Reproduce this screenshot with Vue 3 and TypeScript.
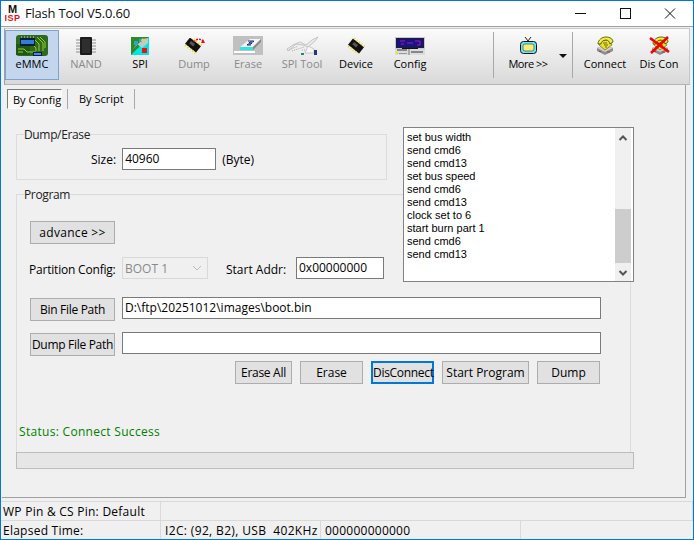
<script setup lang="ts">
interface ToolItem {
  label: string
  w: number
  h: number
  icon: string
  disabled?: boolean
  active?: boolean
}

const chip = `<g transform="rotate(38 9 8)"><rect x="2" y="4" width="14" height="8" fill="#111"/><rect x="5" y="6" width="5" height="3" fill="#555"/>
<path d="M3 3h1M6 3h1M9 3h1M12 3h1M15 3h1M3 13h1M6 13h1M9 13h1M12 13h1M15 13h1" stroke="#e8d800" stroke-width="2"/></g>`

const phone = `<path d="M1 12L9 9L17 12V15L9 19L1 15Z" fill="#8c8c8c"/><path d="M1 12L9 9L17 12L9 16Z" fill="#cfcfcf"/>
<path d="M3 9L5 4H13L16 9L9 14Z" fill="#e8e030" stroke="#55550f" stroke-width=".6"/>
<path d="M2 8C2 4 6 1 10 1C14 1 17 3 17 6L14 8C14 6 12 4 10 4C7 4 5 6 5 8Z" fill="#f6f13c" stroke="#3c3c00" stroke-width=".8"/>
<path d="M7 7h4M8 9h4M9 11h2" stroke="#6a6a10"/>
<path d="M3 15.5h2M11 16h3" stroke="#c33"/>`

const icons: Record<string, string> = {
  emmc: `<rect width="32" height="21" rx="3" fill="#2d6a1e"/><rect y="9" width="14" height="11" fill="#1f5a14"/>
<path d="M18 4l5 5v7M21 2l6 6v8M24 2l5 5v6M16 9l4 4v3M2 14h6l3 3h9M2 17h5" stroke="#9acb2c" fill="none"/>
<rect x="4" y="3" width="15" height="8" fill="#0c1c3a"/><rect x="5" y="5" width="13" height="4" fill="#2f7fd6"/>
<rect x="17" y="17" width="9" height="4" fill="#0c1c3a"/><rect x="18" y="18" width="7" height="2" fill="#3d8fe0"/>
<path d="M5 2h1M8 2h1M11 2h1M14 2h1M17 2h1" stroke="#ddd"/>`,
  nand: `<rect x="4" y="0" width="12" height="18" rx="1" fill="#1c1c1c"/><rect x="6" y="2" width="8" height="14" fill="#2e2e2e"/>
<path d="M0 3h4M0 6h4M0 9h4M0 12h4M0 15h4M16 3h4M16 6h4M16 9h4M16 12h4M16 15h4" stroke="#8c8c8c"/>`,
  spi: `<rect width="18" height="18" fill="#00e5e5"/><path d="M0 0H18L0 18Z" fill="#2f8a25"/><path d="M2 12L12 2L17 1V6L11 11L6 7Z" fill="#b5cfc7"/>
<rect x="3" y="4" width="4" height="4" fill="#2aa7c9"/><rect x="8" y="2" width="3" height="3" fill="#2aa7c9"/>
<path d="M11 1l5 3-2 3-4-3Z" fill="#d8c8a0"/><rect x="11" y="11" width="5" height="5" fill="#f01010"/>`,
  dump: `<g transform="translate(0 -1)">${chip}</g><path d="M10 4 C12 1 16 0 19 3" stroke="#e01010" stroke-width="1.4" fill="none" stroke-dasharray="2 1"/><path d="M17 5L21 5L19 1Z" fill="#e01010"/>`,
  erase: `<rect width="30" height="19" fill="#c0c0c0"/><path d="M7 11L17 3H28L20 11Z" fill="#f4f4f4"/><path d="M15 5h6l-1 1h-3l-1 1h3l-1 1h-3l-1 1h4" stroke="#1a2a80" fill="none"/>
<rect x="7" y="11" width="13" height="3" fill="#2ee6e6"/><path d="M20 11L28 3V6L20 14Z" fill="#8a8a8a"/><rect x="1" y="15" width="21" height="2" fill="#fff"/>`,
  spitool: `<path d="M2 15L10 8L17 9L22 11L29 5L32 1L26 4L20 9L14 6L7 9L1 13Z" fill="#ececec" stroke="#b8b8b8" stroke-width=".8"/>
<path d="M3 14L12 10M6 15L18 11M16 14H28" stroke="#aaa" stroke-dasharray="1 1"/><path d="M22 10L28 13V17H19Z" fill="#f6f6f6" stroke="#c8c8c8"/>
<rect x="28" y="14" width="3" height="5" fill="#1f3a80"/><rect x="15" y="17" width="3" height="2" fill="#2a7f7f"/>`,
  device: chip,
  config: `<rect width="30" height="18" fill="#c8c8c8"/><rect x="2" y="1" width="27" height="2" fill="#1b7f7f"/><rect x="1" y="1" width="28" height="10" fill="#1a1a50"/>
<rect x="3" y="3" width="24" height="6" fill="#1a1090"/><path d="M5 4h5M6 7h3M12 6h6M20 4h5v4h-3" stroke="#a020a0" fill="none"/><rect x="7" y="11" width="16" height="1" fill="#111"/>
<rect y="12" width="30" height="6" fill="#dcdcdc"/><path d="M14 12v6" stroke="#777"/><path d="M2 13h10M16 15h12" stroke="#333"/><rect x="1" y="15" width="2" height="2" fill="#e8e800"/><rect x="4" y="16" width="8" height="1" fill="#999"/>`,
  more: `<path d="M5 0l3 4 3-4" stroke="#222" fill="none"/><rect x=".5" y="4.5" width="16" height="12" rx="3" fill="#6ee6f0" stroke="#111"/><rect x="3" y="7" width="11" height="7" rx="2" fill="#f2ee80" stroke="#333" stroke-width=".6"/>`,
  connect: phone,
  discon: `<g transform="translate(2 0)">${phone}</g><path d="M1 2L20 16M19 1L2 17" stroke="#f00000" stroke-width="2.6"/>`,
}

const leftTools: ToolItem[] = [
  { label: 'eMMC', w: 32, h: 21, icon: 'emmc', active: true },
  { label: 'NAND', w: 20, h: 18, icon: 'nand', disabled: true },
  { label: 'SPI', w: 18, h: 18, icon: 'spi' },
  { label: 'Dump', w: 21, h: 16, icon: 'dump', disabled: true },
  { label: 'Erase', w: 30, h: 19, icon: 'erase', disabled: true },
  { label: 'SPI Tool', w: 33, h: 20, icon: 'spitool', disabled: true },
  { label: 'Device', w: 18, h: 16, icon: 'device' },
  { label: 'Config', w: 30, h: 18, icon: 'config' },
]

const rightTools: ToolItem[] = [
  { label: 'Connect', w: 18, h: 19, icon: 'connect' },
  { label: 'Dis Con', w: 21, h: 19, icon: 'discon' },
]

const moreTool: ToolItem = { label: 'More >>', w: 17, h: 17, icon: 'more' }

const logLines = [
  'set bus width', 'send cmd6', 'send cmd13', 'set bus speed', 'send cmd6',
  'send cmd13', 'clock set to 6', 'start burn part 1', 'send cmd6', 'send cmd13',
]
</script>

<template>
  <div class="window">
    <header class="titlebar">
      <svg class="logo" width="15" height="16" viewBox="0 0 15 16">
        <text x="7.5" y="8" text-anchor="middle" font-size="11" fill="#111">M</text>
        <text x="7.5" y="16" text-anchor="middle" font-size="9" letter-spacing=".5" fill="#e01010">ISP</text>
      </svg>
      <span class="title">Flash Tool V5.0.60</span>
      <div class="controls">
        <svg width="13" height="12" viewBox="0 0 13 12"><path d="M2 6.5H13" stroke="#111" /></svg>
        <svg width="12" height="12" viewBox="0 0 12 12"><rect x="1.5" y="1.5" width="10" height="10" fill="none" stroke="#111" /></svg>
        <svg width="12" height="12" viewBox="0 0 12 12"><path d="M1 1.5L11 11.5M11 1.5L1 11.5" stroke="#111" /></svg>
      </div>
    </header>

    <div class="toolbar">
      <button v-for="t in leftTools" :key="t.label" class="tool" :class="{ active: t.active, off: t.disabled }">
        <span class="tool-icon"><svg :width="t.w" :height="t.h" :viewBox="`0 0 ${t.w} ${t.h}`" v-html="icons[t.icon]"></svg></span>
        <span class="tool-label">{{ t.label }}</span>
      </button>
      <i class="tool-sep first"></i>
      <button class="tool more">
        <span class="tool-icon"><svg :width="moreTool.w" :height="moreTool.h" :viewBox="`0 0 ${moreTool.w} ${moreTool.h}`" v-html="icons[moreTool.icon]"></svg></span>
        <span class="tool-label">{{ moreTool.label }}</span>
      </button>
      <i class="more-arrow"></i>
      <i class="tool-sep second"></i>
      <button v-for="t in rightTools" :key="t.label" class="tool">
        <span class="tool-icon"><svg :width="t.w" :height="t.h" :viewBox="`0 0 ${t.w} ${t.h}`" v-html="icons[t.icon]"></svg></span>
        <span class="tool-label">{{ t.label }}</span>
      </button>
    </div>

    <main class="main">
      <div class="tabs">
        <span class="tab current">By Config</span>
        <i class="tab-sep"></i>
        <span class="tab">By Script</span>
        <i class="tab-sep"></i>
      </div>

      <section class="group dump-group">
        <div class="group-title">Dump/Erase</div>
        <div class="size-row">
          <label>Size:</label>
          <div class="field size-field">40960</div>
          <span>(Byte)</span>
        </div>
      </section>

      <section class="group program-group">
        <div class="group-title">Program</div>
        <button class="btn side-btn wide">advance &gt;&gt;</button>
        <div class="config-row">
          <label class="partition-label">Partition Config:</label>
          <div class="select">
            <span>BOOT 1</span>
            <svg width="10" height="6" viewBox="0 0 10 6"><path d="M1 1L5 5L9 1" fill="none" stroke="#bdbdbd" /></svg>
          </div>
          <label class="addr-label">Start Addr:</label>
          <div class="field addr-field">0x00000000</div>
        </div>
        <div class="path-row bin-row">
          <button class="btn side-btn tight">Bin File Path</button>
          <div class="field path-field">D:\ftp\20251012\images\boot.bin</div>
        </div>
        <div class="path-row dump-row">
          <button class="btn side-btn tight">Dump File Path</button>
          <div class="field path-field"></div>
        </div>
        <div class="actions">
          <button class="btn erase-all tight">Erase All</button>
          <button class="btn erase">Erase</button>
          <button class="btn erase focus tight">DisConnect</button>
          <button class="btn start">Start Program</button>
          <button class="btn erase">Dump</button>
        </div>
        <div class="status">Status: Connect Success</div>
      </section>

      <div class="progress"></div>

      <div class="listbox">
        <div class="log">
          <div v-for="(line, i) in logLines" :key="i">{{ line }}</div>
        </div>
        <div class="scroll">
          <svg width="16" height="16" viewBox="0 0 16 16"><path d="M4.5 12L8 8.5L11.5 12" fill="none" stroke="#555" stroke-width="2" /></svg>
          <div class="track"><div class="thumb"></div></div>
          <svg width="16" height="16" viewBox="0 0 16 16"><path d="M4.5 6L8 9.5L11.5 6" fill="none" stroke="#555" stroke-width="2" /></svg>
        </div>
      </div>
    </main>

    <footer class="statusbar">
      <div class="sb-row">
        <div class="cell c1">WP Pin &amp; CS Pin: Default</div>
        <div class="cell grow"></div>
      </div>
      <div class="sb-row">
        <div class="cell c1">Elapsed Time:</div>
        <div class="cell c2"><span>I2C: (92, B2), USB&nbsp; 402KHz</span></div>
        <div class="cell c3">000000000000</div>
        <div class="cell grow last"></div>
      </div>
    </footer>
  </div>
</template>

<style>
html, body { margin: 0; padding: 0; background: #f0f0f0; }
</style>

<style scoped>
.window {
  width: 694px;
  height: 540px;
  box-sizing: border-box;
  border: 1px solid #0078d7;
  background: #f0f0f0;
  display: flex;
  flex-direction: column;
  font-family: "Open Sans", "Liberation Sans", sans-serif;
  font-size: 12px;
  color: #000;
  overflow: hidden;
}
.titlebar {
  height: 26px;
  flex: none;
  padding-bottom: 2px;
  box-sizing: border-box;
  background: #fff;
  display: flex;
  align-items: center;
  border-bottom: 1px solid #a0a0a0;
}
.logo {
  margin-left: 4px;
  font-family: "Liberation Sans", sans-serif;
  font-weight: bold;
  flex: none;
}
.title { margin-left: 5px; font-size: 13px; letter-spacing: -0.2px; color: #111; }
.controls {
  margin-left: auto;
  margin-right: 17px;
  display: flex;
  gap: 33px;
}
.toolbar {
  height: 57px;
  flex: none;
  margin: 1px 3px 0 3px;
  box-sizing: border-box;
  border: 1px solid #c8c8c8;
  border-bottom-color: #b4b4b4;
  border-left-color: #a0a0a0;
  padding-top: 1px;
  background: linear-gradient(#fbfbfb, #d9d9d9);
  display: flex;
}
.tool {
  width: 54px;
  height: 50px;
  flex: none;
  padding: 0;
  box-sizing: border-box;
  border: 1px solid transparent;
  background: none;
  font: inherit;
  font-size: 11px;
  color: #000;
  display: flex;
  flex-direction: column;
  align-items: center;
}
.tool.active { background: #c4d5ee; border-color: #7da2ce; }
.tool.off { color: #8a8a8a; }
.tool-icon {
  height: 23px;
  margin-top: 3px;
  display: flex;
  align-items: center;
  flex: none;
}
.tool-label { line-height: 13px; }
.tool-sep { width: 1px; height: 46px; margin: 2px 0 0; background: #a8a8a8; flex: none; }
.tool-sep.first { margin-left: 56px; }
.tool-sep.second { margin: 2px 5px 0 5px; }
.more { margin-left: 5px; width: 58px; }
.more .tool-label { letter-spacing: -0.5px; }
.more-arrow {
  width: 0;
  height: 0;
  margin: 24px 0 0 2px;
  border: 4px solid transparent;
  border-top: 4px solid #111;
  border-bottom: 0;
  flex: none;
}
.main {
  position: relative;
  flex: 1;
  margin-left: 1px;
  width: 684px;
  box-sizing: border-box;
  border-right: 1px solid #a0a0a0;
  border-bottom: 1px solid #a0a0a0;
}
.tabs {
  display: flex;
  align-items: center;
  height: 20px;
  margin: 4px 0 0 5px;
  font-size: 11px;
}
.tab { height: 20px; line-height: 20px; padding: 0 5px 0 6px; box-sizing: border-box; white-space: nowrap; }
.tab.current {
  width: 55px;
  padding: 0 0 0 5px;
  border: 1px solid;
  border-color: #7a7a7a #fff #fff #7a7a7a;
  line-height: 19px;
  background: #f8f8f8;
}
.tab-sep { width: 1px; height: 20px; margin: 0 5px; background: #a8a8a8; }
.group { box-sizing: border-box; border: 1px solid #dcdcdc; margin-left: 14px; }
.group-title {
  width: fit-content;
  margin: -8px 0 0 7px;
  background: #f0f0f0;
  line-height: 16px;
  letter-spacing: -0.35px;
  color: #222;
}
.dump-group { width: 371px; height: 46px; margin-top: 25px; }
.size-row { display: flex; align-items: center; margin: 5px 0 0 74px; }
.size-field { width: 94px; margin: 0 6px; }
.field {
  height: 22px;
  box-sizing: border-box;
  border: 1px solid #7a7a7a;
  background: #fff;
  line-height: 19px;
  padding-left: 2px;
  white-space: nowrap;
}
.program-group {
  width: 615px;
  height: 258px;
  margin-top: 14px;
  border-bottom: 0;
}
.btn {
  height: 23px;
  padding: 0;
  box-sizing: border-box;
  border: 1px solid #adadad;
  background: #e1e1e1;
  font: inherit;
  color: #000;
  white-space: nowrap;
  flex: none;
}
.side-btn { width: 85px; display: block; margin-left: 13px; }
.program-group > .side-btn { margin-top: 18px; }
.wide { letter-spacing: 0.3px; }
.tight { letter-spacing: -0.3px; }
.config-row { display: flex; align-items: center; margin-top: 13px; height: 22px; }
.partition-label { margin-left: 12px; width: 93px; padding-top: 2px; letter-spacing: -0.2px; white-space: nowrap; }
.select {
  width: 86px;
  height: 22px;
  box-sizing: border-box;
  border: 1px solid #d9d9d9;
  display: flex;
  align-items: center;
  justify-content: space-between;
  padding: 0 5px 0 2px;
  color: #8a8a8a;
}
.addr-label { margin-left: 18px; width: 70px; padding-top: 2px; white-space: nowrap; }
.addr-field { width: 88px; }
.path-row { display: flex; align-items: flex-start; }
.path-row .btn { margin-top: 1px; }
.path-field { width: 479px; margin-left: 7px; }
.bin-row { margin-top: 18px; }
.dump-row { margin-top: 11px; }
.actions { display: flex; gap: 8px; margin: 5px 0 0 218px; }
.erase-all { width: 57px; }
.erase { width: 63px; }
.start { width: 87px; }
.focus { border: 2px solid #0078d7; }
.status { color: #008000; margin: 39px 0 0 2px; line-height: 17px; letter-spacing: 0.3px; }
.progress {
  width: 618px;
  height: 17px;
  margin-left: 14px;
  box-sizing: border-box;
  border: 1px solid #bcbcbc;
  background: #e6e6e6;
}
.listbox {
  position: absolute;
  left: 401px;
  top: 42px;
  width: 231px;
  height: 155px;
  box-sizing: border-box;
  border: 1px solid #828282;
  background: #fff;
  display: flex;
  justify-content: space-between;
  padding-right: 2px;
}
.log { padding: 3px 0 0 3px; line-height: 13px; font-family: "Liberation Sans", sans-serif; font-size: 11px; }
.scroll { width: 16px; display: flex; flex-direction: column; background: #f0f0f0; }
.track { flex: 1; position: relative; }
.thumb { position: absolute; left: 0; right: 0; bottom: 2px; height: 54px; background: #cdcdcd; }
.statusbar { flex: none; margin-top: 3px; letter-spacing: 0.25px; }
.sb-row { display: flex; height: 19px; box-sizing: border-box; border-top: 1px solid #d9d9d9; }
.cell { line-height: 20px; border-right: 1px solid #d9d9d9; padding-left: 2px; box-sizing: border-box; white-space: nowrap; }
.c1 { width: 160px; }
.c2 { width: 160px; padding-left: 4px; letter-spacing: 0.35px; }
.c3 { width: 200px; padding-left: 4px; }
.grow { flex: 1; border-right: 1px solid #d9d9d9; }
.grow.last { border-right: 0; }
</style>
